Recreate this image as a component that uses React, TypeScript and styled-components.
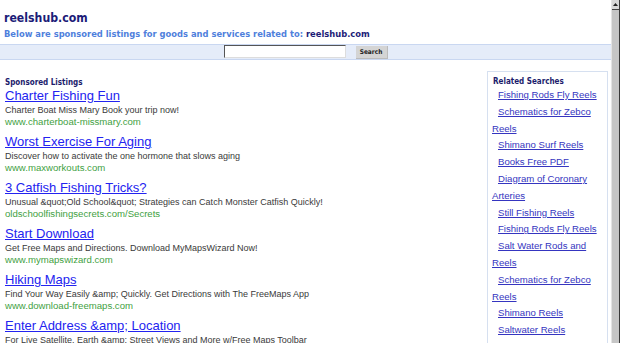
import React from "react";
import styled, { createGlobalStyle } from "styled-components";

const Global = createGlobalStyle`
  html, body { margin: 0; padding: 0; background: #fff; overflow: hidden; }
  body { width: 620px; height: 343px; }
`;

const Frame = styled.div`
  display: flex;
  width: 620px;
  height: 343px;
  overflow: hidden;
`;

const Page = styled.div`
  width: 611px;
  flex: none;
  display: flex;
  flex-direction: column;
`;

const Header = styled.header`
  padding: 10px 0 0 4px;
`;

const SiteTitle = styled.h1`
  margin: 0;
  font-family: "DejaVu Sans Condensed", "DejaVu Sans", sans-serif;
  font-weight: bold;
  font-size: 12.2px;
  line-height: 16px;
  color: #1c1c78;
`;

const Subtitle = styled.div`
  margin-top: 2px;
  font-family: "DejaVu Sans Condensed", "DejaVu Sans", sans-serif;
  font-weight: bold;
  font-size: 9.3px;
  line-height: 12px;
  color: #4f7fdc;
  white-space: nowrap;
  span { color: #1c1c78; }
`;

const SearchBand = styled.div`
  margin-top: 4px;
  height: 22px;
  background: #e5ecf9;
  border-top: 1px solid #c9d7f1;
  border-bottom: 1px solid #c9d7f1;
  display: flex;
  align-items: center;
  justify-content: center;
  gap: 10px;
`;

const SearchInput = styled.div`
  width: 120px;
  height: 11px;
  background: #fff;
  border-top: 1px solid #555;
  border-left: 1px solid #555;
  border-right: 1px solid #ddd;
  border-bottom: 1px solid #ddd;
  margin-top: -2px;
`;

const SearchButton = styled.div`
  width: 31px;
  height: 12px;
  background: #d4d4d4;
  border-right: 1px solid #bbb;
  border-bottom: 1px solid #bbb;
  font-family: "DejaVu Sans Condensed", "DejaVu Sans", sans-serif;
  font-weight: bold;
  font-size: 6.5px;
  line-height: 12px;
  color: #222;
  text-align: center;
  margin-top: 1px;
`;

const Body = styled.div`
  display: flex;
  justify-content: space-between;
  padding: 11px 3px 0 5px;
  flex: 1;
`;

const Listings = styled.div`
  padding-top: 6px;
`;

const SectionLabel = styled.div`
  font-family: "DejaVu Sans Condensed", "DejaVu Sans", sans-serif;
  font-weight: bold;
  font-size: 8px;
  line-height: 11px;
  color: #1c1c6c;
`;

const Listing = styled.div`
  margin-bottom: 6px;
  &:first-of-type { margin-top: 5px; }
`;

const ListingTitle = styled.a`
  display: block;
  font-family: "Liberation Sans", Arial, sans-serif;
  font-size: 13px;
  line-height: 16px;
  color: #2323f0;
  text-decoration: underline;
`;

const ListingDesc = styled.div`
  font-family: "Liberation Sans", Arial, sans-serif;
  font-size: 9px;
  line-height: 12px;
  color: #3a3a3a;
  white-space: nowrap;
`;

const ListingUrl = styled.div`
  font-family: "Liberation Sans", Arial, sans-serif;
  font-size: 9.6px;
  line-height: 12px;
  color: #3f9f3f;
  white-space: nowrap;
`;

const Sidebar = styled.aside`
  width: 110px;
  border: 1px solid #d6e0f0;
  border-bottom: none;
  padding: 4px 5px 0 4px;
`;

const SidebarHeading = styled.div`
  font-family: "DejaVu Sans Condensed", "DejaVu Sans", sans-serif;
  font-weight: bold;
  font-size: 8px;
  line-height: 11px;
  color: #1c1c6c;
  padding-left: 1px;
`;

const RelatedItem = styled.div`
  text-indent: 6px;
  font-family: "Liberation Sans", Arial, sans-serif;
  font-size: 9.6px;
  line-height: 16.8px;
  a { color: #3535c0; text-decoration: underline; }
`;

const Scrollbar = styled.div`
  width: 9px;
  flex: none;
  display: flex;
  flex-direction: column;
  background: #c6c6c6;
  border-left: 1px solid #e4e4e4;
  border-right: 1px solid #3a3a3a;
  box-sizing: border-box;
`;

const ScrollArrow = styled.div`
  height: 9px;
  background: #d8d8d8;
  border-bottom: 1px solid #444;
  display: flex;
  align-items: center;
  justify-content: center;
`;

const listings = [
  {
    title: "Charter Fishing Fun",
    desc: "Charter Boat Miss Mary Book your trip now!",
    url: "www.charterboat-missmary.com",
  },
  {
    title: "Worst Exercise For Aging",
    desc: "Discover how to activate the one hormone that slows aging",
    url: "www.maxworkouts.com",
  },
  {
    title: "3 Catfish Fishing Tricks?",
    desc: "Unusual &quot;Old School&quot; Strategies can Catch Monster Catfish Quickly!",
    url: "oldschoolfishingsecrets.com/Secrets",
  },
  {
    title: "Start Download",
    desc: "Get Free Maps and Directions. Download MyMapsWizard Now!",
    url: "www.mymapswizard.com",
  },
  {
    title: "Hiking Maps",
    desc: "Find Your Way Easily &amp; Quickly. Get Directions with The FreeMaps App",
    url: "www.download-freemaps.com",
  },
  {
    title: "Enter Address &amp; Location",
    desc: "For Live Satellite, Earth &amp; Street Views and More w/Free Maps Toolbar",
    url: "www.download-freemaps.com",
  },
];

const related = [
  "Fishing Rods Fly Reels",
  "Schematics for Zebco Reels",
  "Shimano Surf Reels",
  "Books Free PDF",
  "Diagram of Coronary Arteries",
  "Still Fishing Reels",
  "Fishing Rods Fly Reels",
  "Salt Water Rods and Reels",
  "Schematics for Zebco Reels",
  "Shimano Reels",
  "Saltwater Reels",
];

export default function App() {
  return (
    <>
      <Global />
      <Frame>
        <Page>
          <Header>
            <SiteTitle>reelshub.com</SiteTitle>
            <Subtitle>
              Below are sponsored listings for goods and services related to: <span>reelshub.com</span>
            </Subtitle>
          </Header>
          <SearchBand>
            <SearchInput />
            <SearchButton>Search</SearchButton>
          </SearchBand>
          <Body>
            <Listings>
              <SectionLabel>Sponsored Listings</SectionLabel>
              {listings.map((l, i) => (
                <Listing key={i}>
                  <ListingTitle href="#">{l.title}</ListingTitle>
                  <ListingDesc>{l.desc}</ListingDesc>
                  <ListingUrl>{l.url}</ListingUrl>
                </Listing>
              ))}
            </Listings>
            <Sidebar>
              <SidebarHeading>Related Searches</SidebarHeading>
              {related.map((r, i) => (
                <RelatedItem key={i}>
                  <a href="#">{r}</a>
                </RelatedItem>
              ))}
            </Sidebar>
          </Body>
        </Page>
        <Scrollbar>
          <ScrollArrow>
            <svg width="5" height="3" viewBox="0 0 5 3">
              <path d="M0 3 L2.5 0 L5 3 Z" fill="#222" />
            </svg>
          </ScrollArrow>
        </Scrollbar>
      </Frame>
    </>
  );
}
